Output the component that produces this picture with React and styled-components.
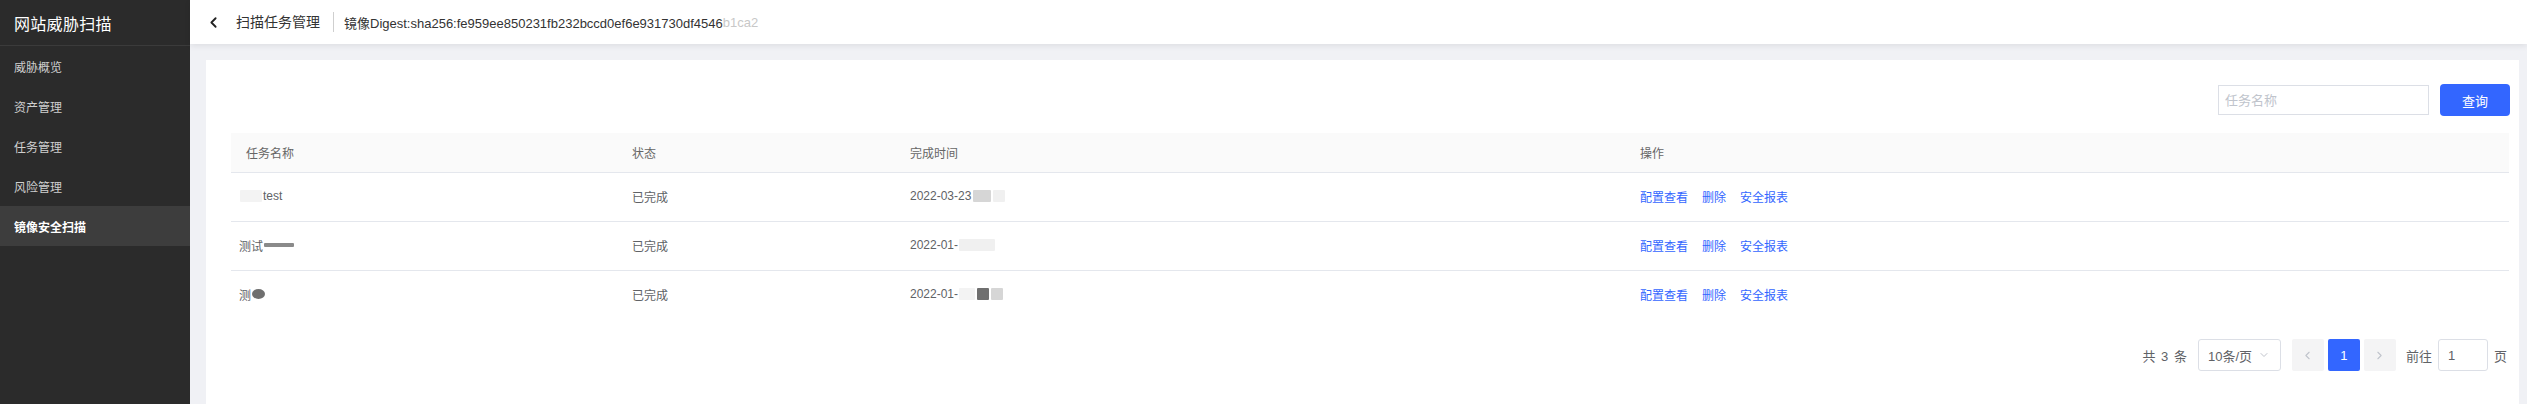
import React from "react";
import styled, { createGlobalStyle } from "styled-components";
import { ChevronLeft, ChevronRight, ChevronDown } from "lucide-react";

const GlobalStyle = createGlobalStyle`
  html, body {
    margin: 0;
    padding: 0;
    height: 100%;
  }
  body {
    font-family: "Liberation Sans", "Noto Sans CJK SC", sans-serif;
    background: #f0f1f5;
  }
  #root {
    height: 100%;
  }
`;

const menu = ["威胁概览", "资产管理", "任务管理", "风险管理", "镜像安全扫描"];

const rows = [
  {
    name: [{ w: 22, tone: "ghost" }, "test"],
    status: "已完成",
    time: ["2022-03-23", { w: 18, tone: "light", gap: 2 }, { w: 12, tone: "faint" }],
  },
  {
    name: ["测试", { w: 30, tone: "mid", h: 4 }],
    status: "已完成",
    time: ["2022-01-", { w: 36, tone: "faint" }],
  },
  {
    name: ["测", { w: 13, tone: "dark", h: 10, round: true }],
    status: "已完成",
    time: ["2022-01-", { w: 16, tone: "ghost" }, { w: 12, tone: "dark" }, { w: 12, tone: "light" }],
  },
];

const Shell = styled.div`
  display: grid;
  grid-template-columns: 190px 1fr;
  height: 404px;
  overflow: hidden;
`;

const Sidebar = styled.aside`
  background: #2b2b2b;
  display: flex;
  flex-direction: column;
`;

const Brand = styled.div`
  height: 45px;
  display: flex;
  align-items: center;
  padding-left: 14px;
  color: #fff;
  font-size: 16px;
  border-bottom: 1px solid #3b3b3b;
  letter-spacing: 0.3px;
`;

const MenuItem = styled.div`
  height: 40px;
  display: flex;
  align-items: center;
  padding-left: 14px;
  font-size: 12px;
  color: ${(p) => (p.$active ? "#ffffff" : "#cfcfcf")};
  font-weight: ${(p) => (p.$active ? 700 : 400)};
  background: ${(p) => (p.$active ? "#3d3d3d" : "transparent")};
`;

const Main = styled.main`
  display: flex;
  flex-direction: column;
  min-width: 0;
`;

const TopBar = styled.header`
  height: 44px;
  background: #fff;
  display: flex;
  align-items: center;
  padding-left: 15px;
  box-shadow: 0 2px 6px rgba(0, 0, 0, 0.08);
  position: relative;
  z-index: 1;
`;

const Back = styled.span`
  display: flex;
  color: #222;
  margin-right: 14px;
`;

const PageTitle = styled.span`
  font-size: 14px;
  color: #333;
  padding-right: 13px;
  border-right: 1px solid #cfcfcf;
  line-height: 20px;
`;

const Digest = styled.span`
  font-size: 13px;
  color: #333;
  margin-left: 10px;
  display: flex;
  align-items: center;
  white-space: nowrap;
`;

const Fade = styled.span`
  color: #c8c8c8;
`;

const Content = styled.div`
  flex: 1;
  padding: 16px 8px 0 16px;
  display: flex;
  min-height: 0;
`;

const Card = styled.section`
  flex: 1;
  background: #fff;
  padding: 24px 9px 0 25px;
`;

const SearchBar = styled.div`
  display: flex;
  justify-content: flex-end;
  align-items: center;
  gap: 11px;
`;

const SearchInput = styled.input`
  width: 211px;
  height: 30px;
  box-sizing: border-box;
  border: 1px solid #dcdfe6;
  border-radius: 0;
  padding: 0 6px;
  font-size: 13px;
  font-family: inherit;
  outline: none;
  &::placeholder {
    color: #c0c4cc;
  }
`;

const PrimaryButton = styled.button`
  width: 70px;
  height: 32px;
  border: none;
  border-radius: 4px;
  background: #3366ff;
  color: #fff;
  font-size: 13px;
  font-family: inherit;
`;

const Table = styled.div`
  margin-top: 17px;
  margin-right: 1px;
`;

const Row = styled.div`
  display: grid;
  grid-template-columns: 386px 278px 730px 1fr;
  height: ${(p) => (p.$head ? "40px" : "49px")};
  box-sizing: border-box;
  background: ${(p) => (p.$head ? "#fafafa" : "#fff")};
  border-bottom: 1px solid ${(p) => (p.$last ? "transparent" : "#e4e7ed")};
  align-items: center;
`;

const Cell = styled.div`
  padding-left: ${(p) => (p.$tight ? "8px" : "15px")};
  font-size: 12px;
  color: ${(p) => (p.$head ? "#666" : "#606266")};
  display: flex;
  align-items: center;
  white-space: nowrap;
  position: relative;
  top: ${(p) => (p.$head ? "0" : "-1px")};
`;

const tones = {
  ghost: "#f3f3f3",
  faint: "#f0f0f0",
  light: "#d6d6d6",
  mid: "#8a8a8a",
  dark: "#6f6f6f",
};

const Redact = styled.span`
  display: inline-block;
  width: ${(p) => p.$w}px;
  height: ${(p) => p.$h || 12}px;
  background: ${(p) => tones[p.$tone]};
  border-radius: ${(p) => (p.$round ? "50%" : "1px")};
  margin-left: ${(p) => p.$gap || 1}px;
  margin-right: 1px;
`;

const Link = styled.a`
  color: #3366ff;
  font-size: 12px;
  margin-right: 14px;
  cursor: pointer;
`;

const Pager = styled.div`
  display: flex;
  justify-content: flex-end;
  align-items: center;
  margin-top: 19px;
  padding-right: 3px;
  font-size: 13px;
  color: #606266;
`;

const Total = styled.span`
  margin-right: 11px;
  word-spacing: 2px;
`;

const SizeSelect = styled.div`
  width: 83px;
  height: 32px;
  box-sizing: border-box;
  border: 1px solid #dcdfe6;
  border-radius: 3px;
  display: flex;
  align-items: center;
  justify-content: space-between;
  padding: 0 10px 0 9px;
  margin-right: 11px;
  color: #606266;
`;

const PageBtn = styled.div`
  width: 32px;
  height: 32px;
  border-radius: 2px;
  display: flex;
  align-items: center;
  justify-content: center;
  margin-right: 4px;
  background: ${(p) => (p.$active ? "#3366ff" : "#f4f4f5")};
  color: ${(p) => (p.$active ? "#fff" : "#c0c4cc")};
  font-size: 13px;
`;

const Jump = styled.span`
  margin-left: 6px;
`;

const JumpInput = styled.div`
  width: 50px;
  height: 32px;
  box-sizing: border-box;
  border: 1px solid #dcdfe6;
  border-radius: 3px;
  margin: 0 6px;
  display: flex;
  align-items: center;
  padding-left: 9px;
  color: #606266;
`;

const renderParts = (parts) =>
  parts.map((p, i) =>
    typeof p === "string" ? (
      <span key={i}>{p}</span>
    ) : (
      <Redact key={i} $w={p.w} $h={p.h} $tone={p.tone} $round={p.round} $gap={p.gap} />
    )
  );

export default function App() {
  return (
    <>
      <GlobalStyle />
      <Shell>
        <Sidebar>
          <Brand>网站威胁扫描</Brand>
          {menu.map((m, i) => (
            <MenuItem key={m} $active={i === menu.length - 1}>
              {m}
            </MenuItem>
          ))}
        </Sidebar>
        <Main>
          <TopBar>
            <Back>
              <ChevronLeft size={17} strokeWidth={2.6} />
            </Back>
            <PageTitle>扫描任务管理</PageTitle>
            <Digest>
              镜像Digest:sha256:fe959ee850231fb232bccd0ef6e931730df4546<Fade>b1ca2</Fade>
            </Digest>
          </TopBar>
          <Content>
            <Card>
              <SearchBar>
                <SearchInput placeholder="任务名称" />
                <PrimaryButton>查询</PrimaryButton>
              </SearchBar>
              <Table>
                <Row $head>
                  <Cell $head>任务名称</Cell>
                  <Cell $head>状态</Cell>
                  <Cell $head>完成时间</Cell>
                  <Cell $head>操作</Cell>
                </Row>
                {rows.map((r, i) => (
                  <Row key={i} $last={i === rows.length - 1}>
                    <Cell $tight>{renderParts(r.name)}</Cell>
                    <Cell>{r.status}</Cell>
                    <Cell>{renderParts(r.time)}</Cell>
                    <Cell>
                      <Link>配置查看</Link>
                      <Link>删除</Link>
                      <Link>安全报表</Link>
                    </Cell>
                  </Row>
                ))}
              </Table>
              <Pager>
                <Total>共 3 条</Total>
                <SizeSelect>
                  <span>10条/页</span>
                  <ChevronDown size={12} color="#c0c4cc" />
                </SizeSelect>
                <PageBtn>
                  <ChevronLeft size={13} />
                </PageBtn>
                <PageBtn $active>1</PageBtn>
                <PageBtn>
                  <ChevronRight size={13} />
                </PageBtn>
                <Jump>前往</Jump>
                <JumpInput>1</JumpInput>
                <span>页</span>
              </Pager>
            </Card>
          </Content>
        </Main>
      </Shell>
    </>
  );
}
